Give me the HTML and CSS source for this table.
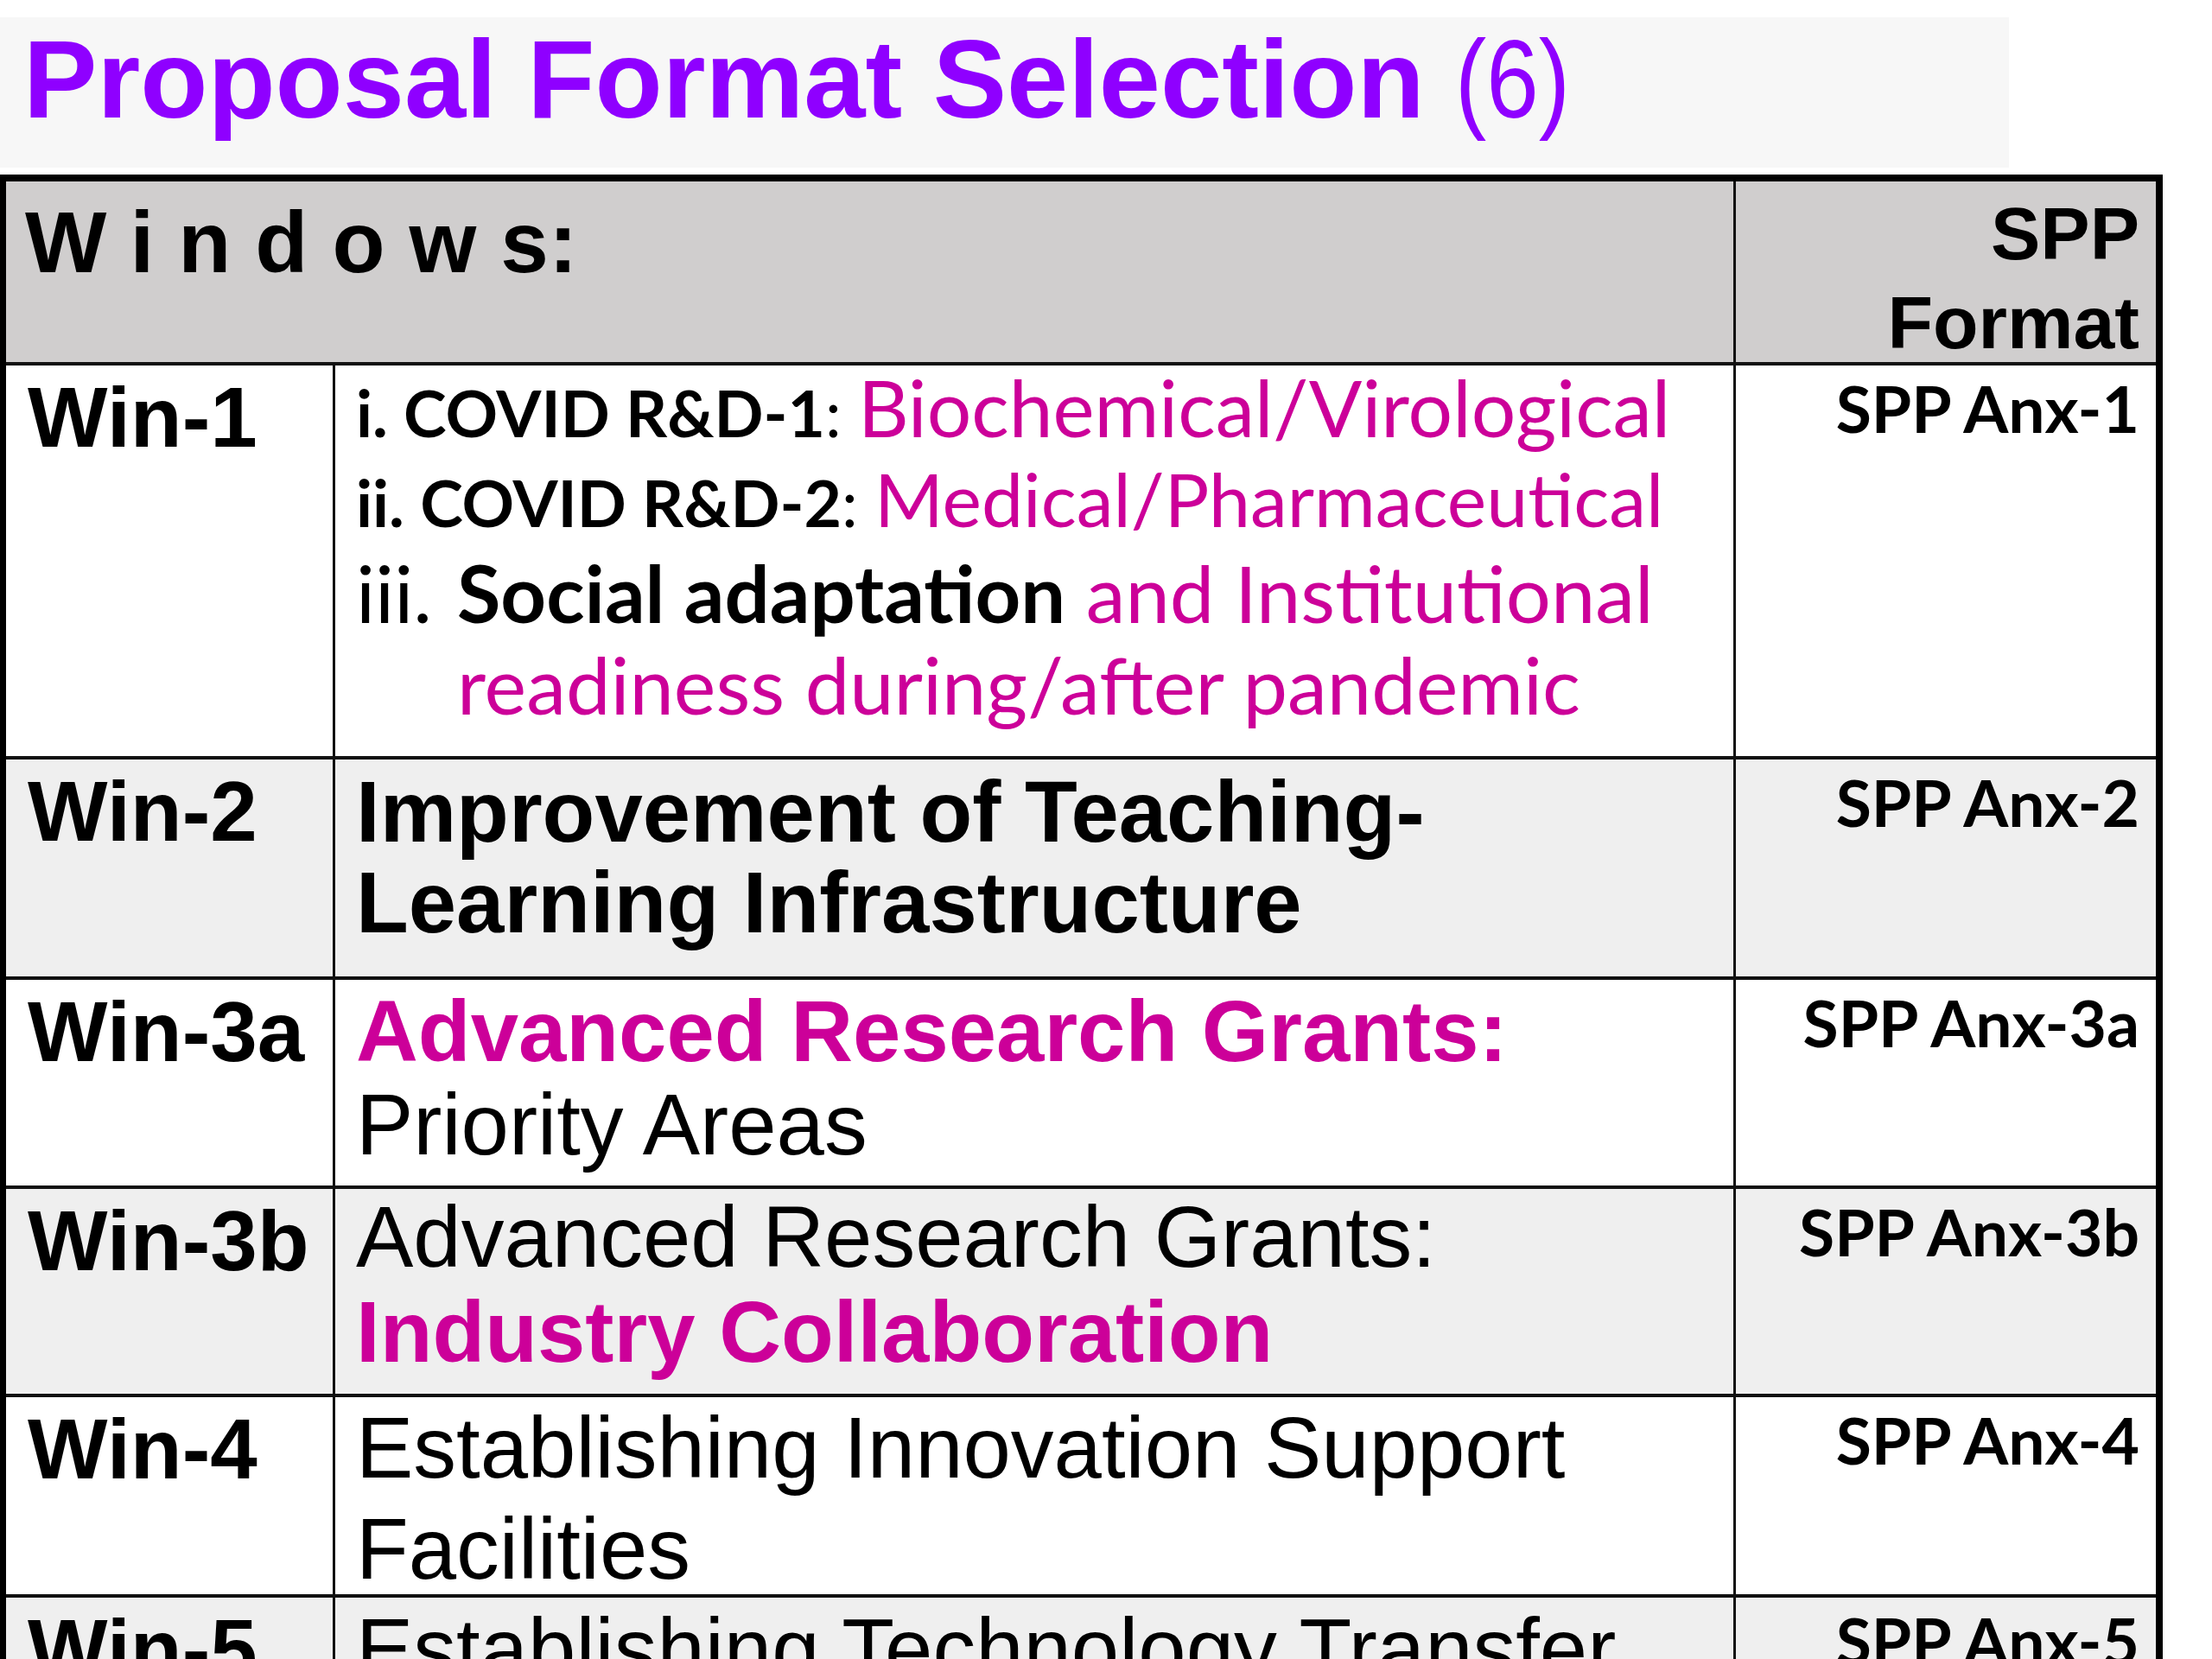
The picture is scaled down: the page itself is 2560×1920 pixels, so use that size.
FILE: index.html
```html
<!DOCTYPE html>
<html lang="en">
<head>
<meta charset="utf-8">
<title>Proposal Format Selection (6)</title>
<link rel="stylesheet" href="styles.css">
</head>
<body>
<header class="title-bar">
  <h1 class="title">Proposal Format Selection <span class="title-count">(6)</span></h1>
</header>
<section class="table">
  <div class="hd hd-win"><span class="spaced">Window</span>s:</div>
  <div class="hd hd-fmt">SPP<br>Format</div>

  <div class="lbl">Win-1</div>
  <div class="desc desc-1">
    <p class="item item-a"><b>i. COVID R&amp;D-1</b>: <span class="mag big big-1">Biochemical/Virological</span></p>
    <p class="item item-a"><b>ii. COVID R&amp;D-2</b>: <span class="mag big big-2">Medical/Pharmaceutical</span></p>
    <p class="item item-b"><span class="num">iii.</span><b>Social adaptation</b> <span class="mag">and Institutional<br>readiness during/after pandemic</span></p>
  </div>
  <div class="fmt">SPP Anx-1</div>

  <div class="lbl alt">Win-2</div>
  <div class="desc alt desc-2"><b>Improvement of Teaching-<br>Learning Infrastructure</b></div>
  <div class="fmt alt">SPP Anx-2</div>

  <div class="lbl">Win-3a</div>
  <div class="desc desc-3a"><b class="mag">Advanced Research Grants:</b><br>Priority Areas</div>
  <div class="fmt">SPP Anx-3a</div>

  <div class="lbl alt">Win-3b</div>
  <div class="desc alt desc-3b">Advanced Research Grants:<br><b class="mag">Industry Collaboration</b></div>
  <div class="fmt alt">SPP Anx-3b</div>

  <div class="lbl">Win-4</div>
  <div class="desc desc-4">Establishing Innovation Support<br>Facilities</div>
  <div class="fmt">SPP Anx-4</div>

  <div class="lbl alt">Win-5</div>
  <div class="desc alt desc-5">Establishing Technology Transfer</div>
  <div class="fmt alt">SPP Anx-5</div>
</section>
</body>
</html>
```

FILE: styles.css
```css
html, body {
  margin: 0;
  padding: 0;
  background: #ffffff;
}

body {
  width: 2560px;
  font-family: "Liberation Sans", Arial, sans-serif;
  color: #000000;
}

.title-bar {
  margin-top: 20px;
  width: 2298px;
  height: 174px;
  padding-left: 27px;
  background: #f7f7f7;
}

.title {
  margin: 0;
  font-family: "Liberation Sans", Arial, sans-serif;
  font-weight: 700;
  font-size: 128px;
  line-height: 143px;
  color: #8f00ff;
  white-space: nowrap;
}

.title-count {
  display: inline-block;
  font-family: "Liberation Sans Narrow", "Liberation Sans", Arial, sans-serif;
  font-weight: 400;
  transform: scaleX(0.85);
  transform-origin: left center;
}

.table {
  margin-top: 8px;
  width: 2488px;
  display: grid;
  grid-template-columns: 378px 1618px 486px;
  grid-template-rows: 209px 452px 251px 238px 237px 228px 260px;
  column-gap: 3px;
  row-gap: 4px;
  background: #111111;
  border-style: solid;
  border-color: #000000;
  border-width: 8px 8px 0 7px;
}

.hd {
  background: #d0cece;
  font-weight: 700;
}

.hd-win {
  grid-column: 1 / 3;
  padding: 13px 0 0 22px;
  font-size: 100px;
  line-height: 115px;
}

.spaced {
  letter-spacing: 28px;
}

.hd-fmt {
  padding: 9px 19px 0 0;
  text-align: right;
  font-size: 86px;
  line-height: 103px;
}

.lbl, .desc, .fmt {
  background: #ffffff;
}

.alt {
  background: #efefef;
}

.lbl {
  padding: 4px 0 0 25px;
  font-size: 98px;
  font-weight: 700;
  line-height: 112px;
  white-space: nowrap;
}

.desc {
  padding-left: 24px;
  font-size: 99.5px;
  white-space: nowrap;
}

.desc-2 { padding-top: 8px; line-height: 105px; }
.desc-3a { padding-top: 6px; line-height: 108px; }
.desc-3b { padding-top: 1px; line-height: 110px; }
.desc-4 { padding-top: 0; line-height: 117px; }
.desc-5 { padding-top: 4px; line-height: 112px; }

.desc-1 {
  padding-top: 2px;
  font-family: Lato, "Open Sans", sans-serif;
}

.item {
  margin: 0;
}

.item-a {
  font-size: 75px;
  line-height: 104px;
}

.big {
  line-height: 80px;
}

.big-1 {
  font-size: 91px;
}

.big-2 {
  font-size: 86px;
}

.item-b {
  margin-top: 0;
  font-size: 92px;
  line-height: 106px;
  padding-left: 117px;
  text-indent: -117px;
}

.num {
  display: inline-block;
  width: 117px;
  text-indent: 0;
}

.mag {
  color: #cc0099;
}

.fmt {
  padding: 4px 19px 0 0;
  text-align: right;
  font-family: Lato, "Open Sans", sans-serif;
  font-weight: 700;
  font-size: 75px;
  line-height: 90px;
  white-space: nowrap;
}
```
